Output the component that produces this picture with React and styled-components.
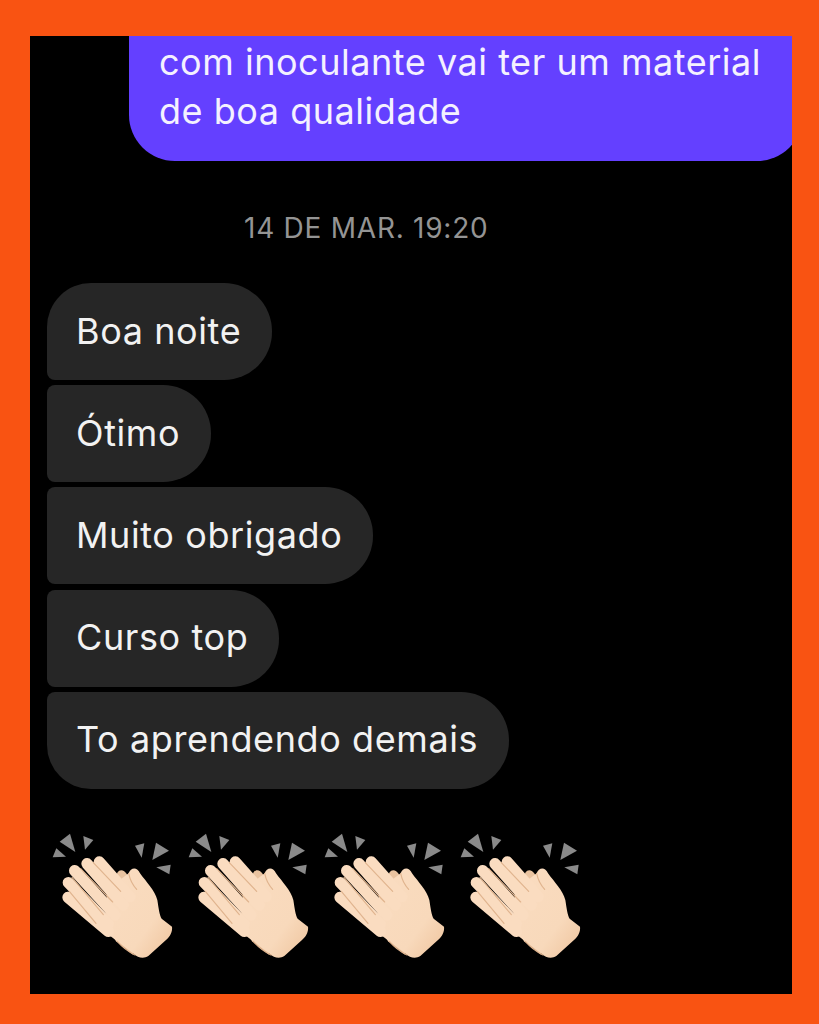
import React from 'react';
import styled, { createGlobalStyle } from 'styled-components';

const GlobalStyle = createGlobalStyle`
  html, body {
    margin: 0;
    background-color: #f95312;
  }
`;

const Page = styled.div`
  width: 819px;
  height: 1024px;
  box-sizing: border-box;
  padding: 36px 27px 30px 30px;
  background-color: #f95312;
  font-family: Inter, 'Noto Sans', sans-serif;
`;

const Chat = styled.div`
  height: 958px;
  background-color: #000;
  overflow: hidden;
  display: flex;
  flex-direction: column;
`;

const SentBubble = styled.div`
  flex: none;
  box-sizing: border-box;
  width: 674px;
  height: 124.5px;
  margin-left: 99px;
  padding: 2px 0 0 30px;
  background-color: #6440ff;
  border-radius: 0 0 46px 46px;
  color: #f4f1ff;
  font-size: 36px;
  letter-spacing: 0.53px;
  line-height: 49px;
  white-space: nowrap;
`;

const Timestamp = styled.div`
  margin: 50.5px 0 0 214px;
  height: 34px;
  color: #949494;
  font-size: 28px;
  letter-spacing: 0.75px;
  line-height: 34px;
  white-space: nowrap;
`;

const Thread = styled.div`
  display: flex;
  flex-direction: column;
  align-items: flex-start;
  gap: 5.2px;
  margin: 38px 0 0 17px;
`;

const Bubble = styled.div`
  box-sizing: border-box;
  height: 97px;
  padding: 0 31px 2px 29px;
  display: flex;
  align-items: center;
  background-color: #262626;
  color: #f2f2f2;
  font-size: 36px;
  letter-spacing: 0.6px;
  white-space: nowrap;
  border-radius: ${({ $position }) =>
    $position === 'first' ? '44px 48px 48px 8px'
    : $position === 'last' ? '8px 48px 48px 44px'
    : '8px 48px 48px 8px'};
`;

const Reactions = styled.div`
  display: flex;
  margin: 31px 0 0 10px;
`;

const ClapSvg = styled.svg`
  flex: none;
  width: 136px;
  height: 150px;
`;

const Finger = styled.line`
  stroke: #fadcc0;
  stroke-width: 34;
  stroke-linecap: round;
`;

const Crease = styled.path`
  fill: none;
  stroke: #e0b48e;
  stroke-width: 3.5;
  stroke-linecap: round;
`;

const Clap = ({ id }) => (
  <ClapSvg viewBox="0 0 408 450">
    <defs>
      <linearGradient id={id} x1="0" y1="0" x2="1" y2="1">
        <stop offset="0" stopColor="#fadcc0" />
        <stop offset="0.65" stopColor="#f8d9bb" />
        <stop offset="1" stopColor="#eec39c" />
      </linearGradient>
    </defs>
    <g fill="#8a8a8a">
      <path d="M59 65 90 41 106 96Z" />
      <path d="M130 48 160 60 135 89Z" />
      <path d="M38 112 49 85 78 110Z" />
      <path d="M285 77 313 70 305 113Z" />
      <path d="M337 120 348 68 387 92Z" />
      <path d="M349 142 392 134 388 163Z" />
    </g>
    <path
      d="M232 158C240 145 254 150 262 165L290 250 280 405 228 364 190 300Z"
      fill="#e9c3a0"
    />
    <path
      d="M266 160C272 142 292 140 300 160 318 185 345 212 352 240 356 265 358 285 365 296L396 320C398 335 390 350 378 360L325 408C310 418 292 412 282 402L200 340 200 210Z"
      fill={`url(#${id})`}
    />
    <Finger x1="178" y1="126" x2="270" y2="230" />
    <Finger x1="141" y1="131" x2="250" y2="255" />
    <Finger x1="104" y1="152" x2="225" y2="285" />
    <Finger x1="85" y1="188" x2="205" y2="312" />
    <Finger x1="84" y1="232" x2="205" y2="334" />
    <Crease d="M160 128 242 214" />
    <Crease d="M122 146 218 246" />
    <Crease d="M96 172 190 284" />
    <Crease d="M88 214 168 310" />
    <Crease d="M266 160C270 180 278 195 290 208" />
    <Crease d="M232 364C250 385 265 395 285 405" />
  </ClapSvg>
);

const messages = ['Boa noite', 'Ótimo', 'Muito obrigado', 'Curso top', 'To aprendendo demais'];

const App = () => (
  <Page>
    <GlobalStyle />
    <Chat>
      <SentBubble>
        com inoculante vai ter um material
        <br />
        de boa qualidade
      </SentBubble>
      <Timestamp>14 DE MAR. 19:20</Timestamp>
      <Thread>
        {messages.map((text, i) => (
          <Bubble
            key={text}
            $position={i === 0 ? 'first' : i === messages.length - 1 ? 'last' : 'middle'}
          >
            {text}
          </Bubble>
        ))}
      </Thread>
      <Reactions>
        {['clap-a', 'clap-b', 'clap-c', 'clap-d'].map(id => (
          <Clap key={id} id={id} />
        ))}
      </Reactions>
    </Chat>
  </Page>
);

export default App;
